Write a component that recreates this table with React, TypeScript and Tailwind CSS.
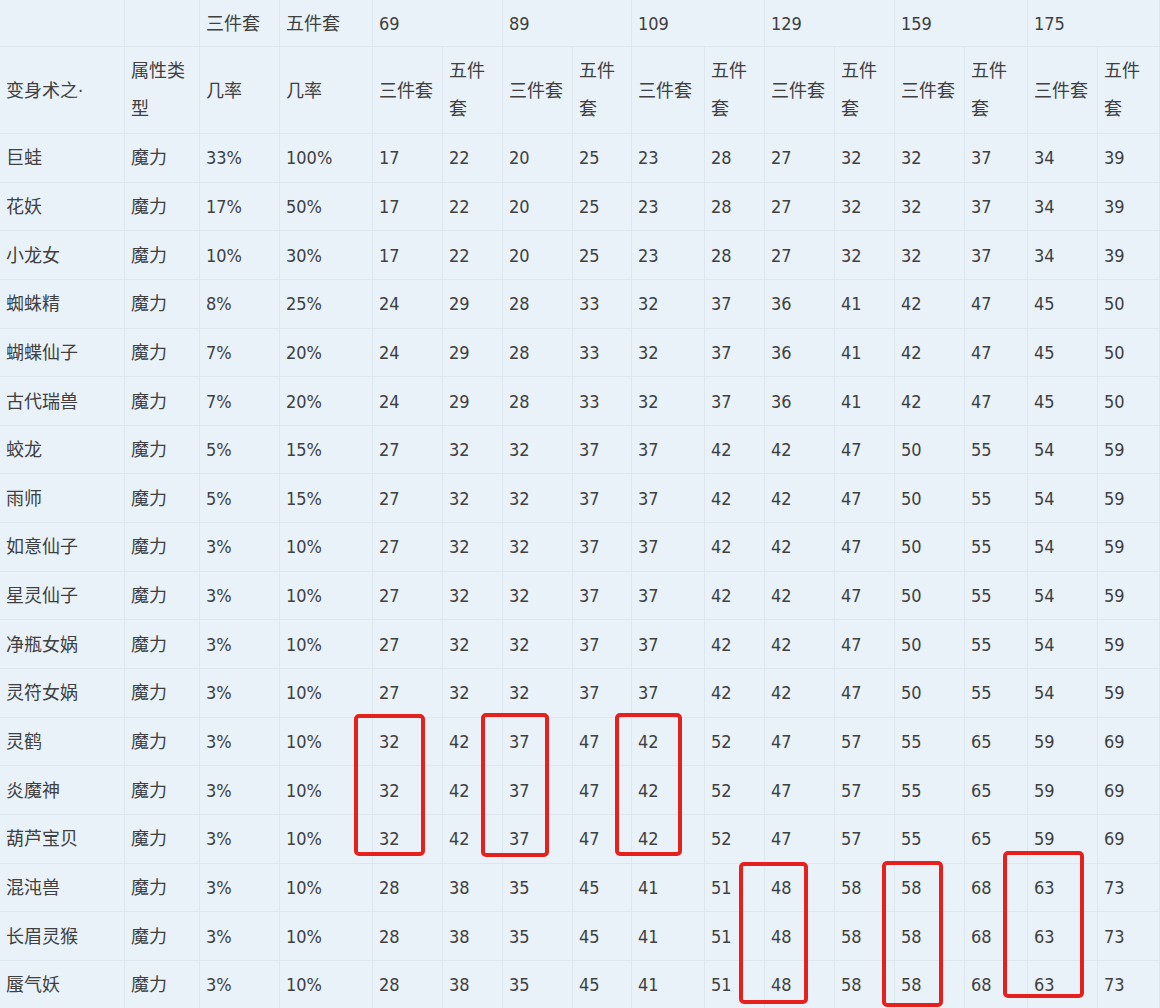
import React from "react";

const rows: [string, string, string, number[]][] = [
  ["巨蛙", "33%", "100%", [17, 22, 20, 25, 23, 28, 27, 32, 32, 37, 34, 39]],
  ["花妖", "17%", "50%", [17, 22, 20, 25, 23, 28, 27, 32, 32, 37, 34, 39]],
  ["小龙女", "10%", "30%", [17, 22, 20, 25, 23, 28, 27, 32, 32, 37, 34, 39]],
  ["蜘蛛精", "8%", "25%", [24, 29, 28, 33, 32, 37, 36, 41, 42, 47, 45, 50]],
  ["蝴蝶仙子", "7%", "20%", [24, 29, 28, 33, 32, 37, 36, 41, 42, 47, 45, 50]],
  ["古代瑞兽", "7%", "20%", [24, 29, 28, 33, 32, 37, 36, 41, 42, 47, 45, 50]],
  ["蛟龙", "5%", "15%", [27, 32, 32, 37, 37, 42, 42, 47, 50, 55, 54, 59]],
  ["雨师", "5%", "15%", [27, 32, 32, 37, 37, 42, 42, 47, 50, 55, 54, 59]],
  ["如意仙子", "3%", "10%", [27, 32, 32, 37, 37, 42, 42, 47, 50, 55, 54, 59]],
  ["星灵仙子", "3%", "10%", [27, 32, 32, 37, 37, 42, 42, 47, 50, 55, 54, 59]],
  ["净瓶女娲", "3%", "10%", [27, 32, 32, 37, 37, 42, 42, 47, 50, 55, 54, 59]],
  ["灵符女娲", "3%", "10%", [27, 32, 32, 37, 37, 42, 42, 47, 50, 55, 54, 59]],
  ["灵鹤", "3%", "10%", [32, 42, 37, 47, 42, 52, 47, 57, 55, 65, 59, 69]],
  ["炎魔神", "3%", "10%", [32, 42, 37, 47, 42, 52, 47, 57, 55, 65, 59, 69]],
  ["葫芦宝贝", "3%", "10%", [32, 42, 37, 47, 42, 52, 47, 57, 55, 65, 59, 69]],
  ["混沌兽", "3%", "10%", [28, 38, 35, 45, 41, 51, 48, 58, 58, 68, 63, 73]],
  ["长眉灵猴", "3%", "10%", [28, 38, 35, 45, 41, 51, 48, 58, 58, 68, 63, 73]],
  ["蜃气妖", "3%", "10%", [28, 38, 35, 45, 41, 51, 48, 58, 58, 68, 63, 73]],
];

const levels = ["69", "89", "109", "129", "159", "175"];

const Cell = ({ children, className = "" }: { children?: React.ReactNode; className?: string }) => (
  <div className={`flex items-center pl-[6px] pr-[5px] border-r border-b border-[#dce7f0] ${className}`}>
    {children}
  </div>
);

// red highlight frames drawn over the table
const boxes = [
  "left-[354px] top-[714px] w-[71px] h-[142px]",
  "left-[481px] top-[713px] w-[68px] h-[144px]",
  "left-[615px] top-[713px] w-[67px] h-[143px]",
  "left-[739px] top-[862px] w-[69px] h-[142px]",
  "left-[882px] top-[861px] w-[61px] h-[146px]",
  "left-[1003px] top-[851px] w-[81px] h-[147px]",
];

export default function App() {
  return (
    <div
      className="relative w-[1160px] h-[1008px] overflow-hidden bg-[#e9f2f9] text-[#404040] text-[18px]"
      style={{ fontFamily: '"DejaVu Sans Condensed", "DejaVu Sans", "Noto Sans CJK SC", sans-serif' }}
    >
      <div className="grid grid-cols-[125px_75px_80px_93px_70px_60px_70px_59px_73px_60px_70px_60px_70px_63px_70px_62px] grid-rows-[47px_87px_repeat(18,48.65px)]">
        <Cell />
        <Cell />
        <Cell>三件套</Cell>
        <Cell>五件套</Cell>
        {levels.map((l) => (
          <Cell key={l} className="col-span-2">{l}</Cell>
        ))}

        <Cell>变身术之·</Cell>
        <Cell className="leading-[38px]">属性类型</Cell>
        <Cell>几率</Cell>
        <Cell>几率</Cell>
        {levels.map((l) => (
          <React.Fragment key={l}>
            <Cell>三件套</Cell>
            <Cell className="leading-[38px]">五件套</Cell>
          </React.Fragment>
        ))}

        {rows.map(([name, p3, p5, nums]) => (
          <React.Fragment key={name}>
            <Cell>{name}</Cell>
            <Cell>魔力</Cell>
            <Cell>{p3}</Cell>
            <Cell>{p5}</Cell>
            {nums.map((n, i) => (
              <Cell key={i}>{n}</Cell>
            ))}
          </React.Fragment>
        ))}
      </div>

      {boxes.map((b) => (
        <div key={b} className={`absolute ${b} border-[4px] border-[#e6201c] rounded-[5px]`} />
      ))}
    </div>
  );
}
